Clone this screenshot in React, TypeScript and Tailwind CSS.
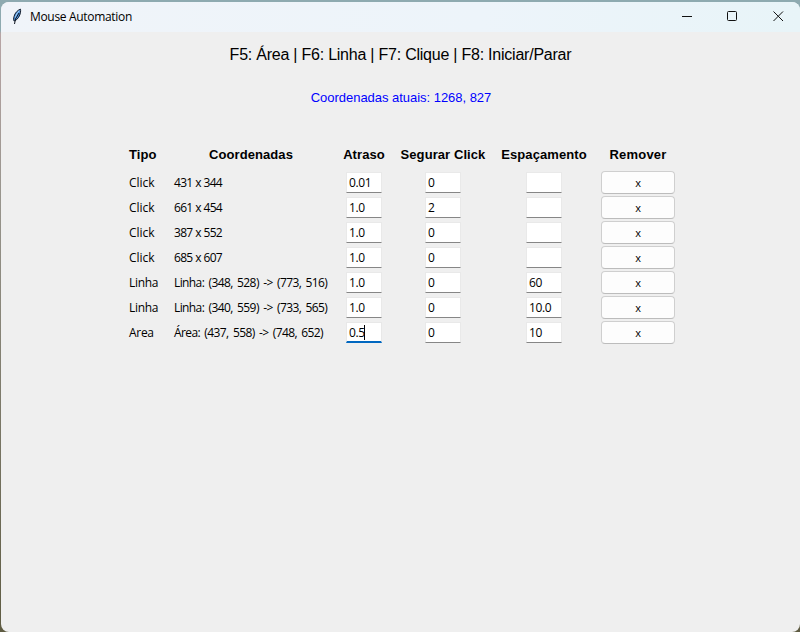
import React from "react";

type Row = {
  type: string;
  coords: string;
  delay: string;
  hold: string;
  spacing: string;
  focused?: boolean;
};

const rows: Row[] = [
  { type: "Click", coords: "431 x 344", delay: "0.01", hold: "0", spacing: "" },
  { type: "Click", coords: "661 x 454", delay: "1.0", hold: "2", spacing: "" },
  { type: "Click", coords: "387 x 552", delay: "1.0", hold: "0", spacing: "" },
  { type: "Click", coords: "685 x 607", delay: "1.0", hold: "0", spacing: "" },
  { type: "Linha", coords: "Linha: (348, 528) -> (773, 516)", delay: "1.0", hold: "0", spacing: "60" },
  { type: "Linha", coords: "Linha: (340, 559) -> (733, 565)", delay: "1.0", hold: "0", spacing: "10.0" },
  { type: "Area", coords: "Área: (437, 558) -> (748, 652)", delay: "0.5", hold: "0", spacing: "10", focused: true },
];

const columns = "grid grid-cols-[45px_154px_72px_86px_115px_74px]";

function Entry({ value, focused = false }: { value: string; focused?: boolean }) {
  return (
    <div
      className={
        focused
          ? "flex h-[21px] w-9 items-center border border-b-2 border-[#e8e8e8] border-b-[#0067c0] bg-white pl-[2px] pt-px"
          : "flex h-[21px] w-9 items-center border border-[#e9e9e9] border-b-[#868686] bg-white pl-[2px]"
      }
    >
      <span className="leading-4">{value}</span>
      {focused && <span className="-ml-px h-[15px] w-px bg-black" />}
    </div>
  );
}

function Feather() {
  return (
    <svg width="12" height="18" viewBox="0 0 12 18" className="ml-[10px]">
      <path d="M9.500 1.200C7 1.800 3.800 5 3 8.500c-.5 2-.5 3.500.1 4.600C6.500 12 9 8 9.500 4.200c.1-1.100.2-2.200 0-3Z" fill="#4b93e0" stroke="#151b28" strokeWidth="1" />
      <path d="M8.300 2.800C6.300 4.500 5 7 4.400 9.500" fill="none" stroke="#a7d0f5" strokeWidth="1" />
      <path d="M8 5 4.500 11 3.500 16" fill="none" stroke="#101520" strokeWidth="1" />
    </svg>
  );
}

export default function App() {
  return (
    <div className="h-[632px] w-[800px] overflow-hidden bg-[linear-gradient(to_bottom,#8eaab0_0px,#8eaab0_30px,#b8a5a5_34px,#98958d_200px,#5e5b42_632px)] pl-px pt-[2px] font-['Open_Sans','Noto_Sans',sans-serif] text-black">
      <div className="flex h-[630px] w-[799px] flex-col overflow-hidden rounded-lg bg-[#efefef]">
        <header className="flex h-[30px] shrink-0 items-center bg-[linear-gradient(to_right,#f0f4f9,#edf4fa_60%,#e8f4f8)]">
          <Feather />
          <h1 className="ml-[7px] grow text-[12px] leading-4 tracking-[-0.32px]">Mouse Automation</h1>
          <svg width="118" height="30" viewBox="0 0 118 30" fill="none" stroke="#111" strokeWidth="1">
            <path d="M0 14.500h10" />
            <rect x="45.500" y="9.500" width="9" height="9" rx="1" />
            <path d="m91.500 9.500 9.500 9.500m0-9.500-9.500 9.500" />
          </svg>
        </header>
        <p className="mt-[13px] text-center font-['Liberation_Sans',Arial,sans-serif] text-[16px] leading-5 tracking-[-0.23px]">
          F5: Área | F6: Linha | F7: Clique | F8: Iniciar/Parar
        </p>
        <p className="mt-[25px] pl-px text-center font-['Liberation_Sans',Arial,sans-serif] text-[13px] leading-4 tracking-[-0.03px] text-[#0000ff]">
          Coordenadas atuais: 1268, 827
        </p>
        <main className="ml-[128px] mt-[41px] text-[12px]">
          <div className={`${columns} mb-[7px] h-4 whitespace-nowrap font-['Liberation_Sans',Arial,sans-serif] text-[13px] font-bold leading-4 tracking-[0.08px]`}>
            <span>Tipo</span>
            <span className="text-center">Coordenadas</span>
            <span className="text-center">Atraso</span>
            <span className="text-center">Segurar Click</span>
            <span className="pl-px text-center">Espaçamento</span>
            <span className="text-center tracking-[0.2px]">Remover</span>
          </div>
          {rows.map((row, i) => (
            <div key={i} className={`${columns} h-[25px] items-center whitespace-nowrap tracking-[-0.4px]`}>
              <span className={row.type === "Click" ? "tracking-[-0.05px]" : "tracking-[-0.3px]"}>{row.type}</span>
              <span className={row.type === "Click" ? "tracking-[-0.7px] [word-spacing:0.3px]" : "tracking-[-0.6px] [word-spacing:1.8px]"}>{row.coords}</span>
              <div className="flex justify-center"><Entry value={row.delay} focused={row.focused} /></div>
              <div className="flex justify-center"><Entry value={row.hold} /></div>
              <div className="flex justify-center pl-px"><Entry value={row.spacing} /></div>
              <button className="h-[23px] rounded border border-[#cfcfcf] border-b-[#bcbcbc] bg-[#fdfdfd] pt-px text-[11px] leading-5">x</button>
            </div>
          ))}
        </main>
      </div>
    </div>
  );
}
